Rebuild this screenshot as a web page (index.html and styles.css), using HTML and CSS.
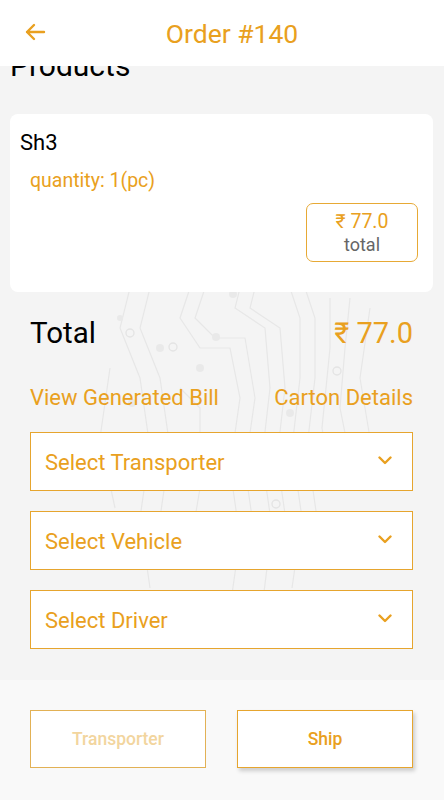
FILE: index.html
```html
<!DOCTYPE html>
<html lang="en">
<head>
    <meta charset="UTF-8">
    <title>Order #140</title>
    <link rel="stylesheet" href="styles.css">
</head>
<body>
    <div class="app">
        <header class="topbar">
            <button class="back" aria-label="Back">
                <svg width="24" height="24" viewBox="0 0 24 24">
                    <path d="M21 12H4M11 5L4 12l7 7" fill="none" stroke="#e9a020" stroke-width="2.4" stroke-linecap="round" stroke-linejoin="round"/>
                </svg>
            </button>
            <h1>Order #140</h1>
        </header>

        <main class="content">
            <!-- faint circuit board decoration -->
            <svg class="circuit" width="444" height="320" viewBox="0 0 444 320">
                <g fill="none" stroke="#e7e7e7" stroke-width="1.2">
                    <path d="M130 0 L120 40 L140 90 L150 160 L140 230 L150 300"/>
                    <path d="M150 0 L140 40 L160 90 L170 160 L160 230"/>
                    <path d="M190 0 L180 30 L200 60 L230 60 L240 110 L230 180 L240 250 L230 320"/>
                    <path d="M205 0 L195 30 L215 50 L245 50 L255 110 L245 180 L255 250"/>
                    <path d="M240 0 L235 20 L265 40 L270 100 L262 170 L272 240 L262 320"/>
                    <path d="M255 0 L250 20 L280 40 L285 100 L277 170 L287 240"/>
                    <path d="M290 0 L300 30 L300 90 L292 160 L302 230 L292 300"/>
                    <path d="M305 0 L315 30 L315 90 L307 160 L317 230"/>
                    <path d="M330 10 L330 60 L322 140 L332 200"/>
                    <path d="M350 10 L345 60 L340 120 L350 170"/>
                    <path d="M370 20 L360 90 L370 150"/>
                    <path d="M180 100 L200 120 L200 200 L190 260"/>
                    <path d="M110 80 L100 150 L115 220"/>
                </g>
                <g fill="#e9e9e9">
                    <circle cx="160" cy="60" r="4"/>
                    <circle cx="200" cy="80" r="4"/>
                    <circle cx="132" cy="115" r="4"/>
                    <circle cx="233" cy="6" r="4"/>
                    <circle cx="216" cy="49" r="4"/>
                    <circle cx="290" cy="125" r="4"/>
                    <circle cx="120" cy="30" r="3"/>
                </g>
                <g fill="none" stroke="#e4e4e4" stroke-width="1.4">
                    <circle cx="130" cy="45" r="4"/>
                    <circle cx="173" cy="59" r="4"/>
                    <circle cx="337" cy="83" r="4"/>
                    <circle cx="276" cy="216" r="4"/>
                </g>
            </svg>

            <h2 class="section-title">Products</h2>

            <div class="product-card">
                <div class="product-name">Sh3</div>
                <div class="product-qty">quantity: 1(pc)</div>
                <div class="price-box">
                    <span class="price">₹ 77.0</span>
                    <span class="price-label">total</span>
                </div>
            </div>

            <div class="total-row">
                <span class="total-label">Total</span>
                <span class="total-amount">₹ 77.0</span>
            </div>

            <div class="links">
                <a href="#">View Generated Bill</a>
                <a href="#">Carton Details</a>
            </div>

            <div class="select">
                <span>Select Transporter</span>
                <svg class="chevron" width="14" height="9" viewBox="0 0 14 9"><path d="M1.5 1.5L7 7l5.5-5.5" fill="none" stroke="#e9a020" stroke-width="2.4" stroke-linecap="round" stroke-linejoin="round"/></svg>
            </div>
            <div class="select">
                <span>Select Vehicle</span>
                <svg class="chevron" width="14" height="9" viewBox="0 0 14 9"><path d="M1.5 1.5L7 7l5.5-5.5" fill="none" stroke="#e9a020" stroke-width="2.4" stroke-linecap="round" stroke-linejoin="round"/></svg>
            </div>
            <div class="select">
                <span>Select Driver</span>
                <svg class="chevron" width="14" height="9" viewBox="0 0 14 9"><path d="M1.5 1.5L7 7l5.5-5.5" fill="none" stroke="#e9a020" stroke-width="2.4" stroke-linecap="round" stroke-linejoin="round"/></svg>
            </div>
        </main>

        <footer class="actions">
            <button class="btn btn-disabled">Transporter</button>
            <button class="btn btn-primary">Ship</button>
        </footer>
    </div>
</body>
</html>
```

FILE: styles.css
```css
* {
    box-sizing: border-box;
}
body {
    margin: 0;
    font-family: Roboto, "Noto Sans", sans-serif;
    background-color: #f9f9f9;
}
.app {
    width: 444px;
    height: 800px;
    display: flex;
    flex-direction: column;
    overflow: hidden;
}
.topbar {
    height: 66px;
    flex-shrink: 0;
    background-color: #fff;
    display: flex;
    align-items: center;
    justify-content: center;
    position: relative;
    z-index: 2;
}
.back {
    position: absolute;
    left: 23px;
    top: 20px;
    background: none;
    border: none;
    padding: 0;
    width: 24px;
    height: 24px;
    display: flex;
    align-items: center;
    justify-content: center;
}
.topbar h1 {
    margin: 0;
    font-size: 26.5px;
    font-weight: 400;
    color: #e9a020;
    margin-left: 20px;
}
.content {
    height: 614px;
    flex-shrink: 0;
    background-color: #f4f4f4;
    padding: 0 31px 30px 30px;
    position: relative;
}
.circuit {
    position: absolute;
    left: 0;
    top: 222px;
}
.section-title {
    margin: -17px 0 0 -20px;
    font-size: 30px;
    line-height: 34px;
    font-weight: 400;
    color: #000;
    position: relative;
}
.product-card {
    margin: 31px -20px 0 -20px;
    background-color: #fff;
    border-radius: 8px;
    padding: 16px 15px 30px 10px;
    display: flex;
    flex-direction: column;
    position: relative;
}
.product-name {
    font-size: 22px;
    line-height: 26px;
    color: #000;
}
.product-qty {
    margin: 13px 0 0 10px;
    font-size: 19.5px;
    line-height: 24px;
    color: #e9a020;
}
.price-box {
    align-self: flex-end;
    margin-top: 10px;
    width: 112px;
    height: 59px;
    border: 1px solid #e7a935;
    border-radius: 7px;
    display: flex;
    flex-direction: column;
    align-items: center;
    justify-content: center;
    padding-top: 2px;
}
.price {
    font-size: 19.5px;
    line-height: 22px;
    color: #e9a020;
}
.price-label {
    font-size: 18px;
    line-height: 24px;
    color: #666;
}
.total-row {
    margin-top: 24px;
    height: 34px;
    display: flex;
    justify-content: space-between;
    align-items: center;
    position: relative;
}
.total-label {
    font-size: 29.5px;
    color: #000;
}
.total-amount {
    font-size: 29px;
    color: #e9a020;
}
.links {
    margin-top: 36px;
    display: flex;
    justify-content: space-between;
    position: relative;
}
.links a {
    font-size: 22px;
    line-height: 24px;
    color: #e9a020;
    text-decoration: none;
}
.select {
    margin-top: 20px;
    height: 59px;
    background-color: #fff;
    border: 1.5px solid #e6a52e;
    display: flex;
    align-items: center;
    justify-content: space-between;
    padding: 0 20px 0 14px;
    position: relative;
}
.links + .select {
    margin-top: 22px;
}
.select span {
    font-size: 22px;
    color: #e9a020;
    margin-top: 2px;
}
.chevron {
    margin-top: -2px;
}
.actions {
    flex: 1;
    background-color: #f9f9f9;
    display: flex;
    justify-content: space-between;
    padding: 30px 31px 0 30px;
}
.btn {
    width: 176px;
    height: 58px;
    background-color: #fff;
    border: 1.5px solid #e2b155;
    font-family: Roboto, "Noto Sans", sans-serif;
    font-size: 17.5px;
    font-weight: 500;
}
.btn-disabled {
    color: #f2d59e;
}
.btn-primary {
    color: #e9a020;
    border-color: #e6a52e;
    box-shadow: 2px 3px 4px rgba(0,0,0,0.18);
}
```
